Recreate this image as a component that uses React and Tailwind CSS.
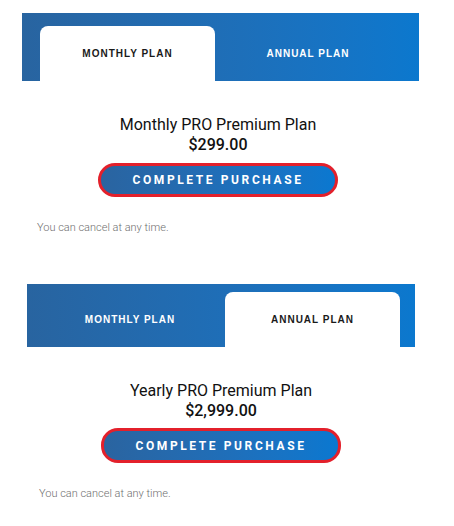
import React from 'react';

const tabText = "font-['Liberation_Sans',Arial,sans-serif] font-bold text-[10px] tracking-[1px]";

function PurchaseButton() {
  return (
    <button className="flex h-full w-full items-center justify-center rounded-[17px] border-[3px] border-[#e3202b] bg-linear-to-r from-[#2a64a0] to-[#0a78d0] font-['Roboto',sans-serif] text-[12px] font-bold tracking-[2.6px] text-white">
      COMPLETE PURCHASE
    </button>
  );
}

export default function App() {
  return (
    <div className="min-h-[526px] w-[454px] bg-white pt-[13px] font-['Roboto',sans-serif]">
      {/* Monthly panel */}
      <div className="ml-[22px] w-[397px]">
        <div className="flex h-[68px] items-end bg-linear-to-r from-[#2864a0] to-[#0b78ce] px-[18px]">
          <div className={`flex h-[55px] w-[175px] items-center justify-center rounded-t-[8px] bg-white text-[#1a1a1a] ${tabText}`}>
            MONTHLY PLAN
          </div>
          <div className={`flex h-[55px] flex-1 items-center justify-center text-white ${tabText}`}>
            ANNUAL PLAN
          </div>
        </div>
        <div className="flex flex-col items-center pr-[5px]">
          <div className="mt-[34px] text-[16px] leading-[20px] text-[#111]">Monthly PRO Premium Plan</div>
          <div className="text-[16px] font-medium leading-[20px] text-[#111]">$299.00</div>
          <div className="mt-[8px] h-[34px] w-[240px]">
            <PurchaseButton />
          </div>
        </div>
        <div className="mt-[23px] pl-[15px] text-[11px] font-light leading-[16px] text-[#6f6f6f]">You can cancel at any time.</div>
      </div>

      {/* Annual panel */}
      <div className="ml-[27px] mt-[48px] w-[388px]">
        <div className="flex h-[63px] items-end bg-linear-to-r from-[#2864a0] to-[#0b78ce] px-[8px] pr-[15px]">
          <div className={`flex h-[55px] flex-1 items-center justify-center text-white ${tabText}`}>
            MONTHLY PLAN
          </div>
          <div className={`flex h-[55px] w-[175px] items-center justify-center rounded-t-[8px] bg-white text-[#1a1a1a] ${tabText}`}>
            ANNUAL PLAN
          </div>
        </div>
        <div className="flex flex-col items-center">
          <div className="mt-[34px] text-[16px] leading-[20px] text-[#111]">Yearly PRO Premium Plan</div>
          <div className="text-[16px] font-medium leading-[20px] text-[#111]">$2,999.00</div>
          <div className="mt-[7px] h-[35px] w-[240px]">
            <PurchaseButton />
          </div>
        </div>
        <div className="mt-[23px] pl-[12px] text-[11px] font-light leading-[16px] text-[#6f6f6f]">You can cancel at any time.</div>
      </div>
    </div>
  );
}
